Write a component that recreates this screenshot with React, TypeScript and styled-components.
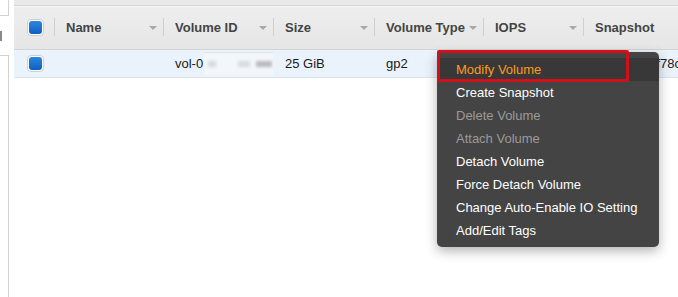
import styled, { createGlobalStyle } from "styled-components";

const GlobalStyle = createGlobalStyle`
  html, body {
    margin: 0;
    padding: 0;
    background: #ffffff;
    font-family: "Liberation Sans", Arial, sans-serif;
  }
`;

const Page = styled.div`
  width: 678px;
  height: 297px;
  display: flex;
  overflow: hidden;
  background: #ffffff;
`;

const Sidebar = styled.div`
  width: 14px;
  flex-shrink: 0;
  display: flex;
  flex-direction: column;
`;

const SideBoxTop = styled.div`
  width: 8px;
  height: 15px;
  border-right: 1px solid #d2d2d2;
  border-bottom: 1px solid #d2d2d2;
`;

const SideMark = styled.div`
  width: 2px;
  height: 10px;
  margin-top: 15px;
  background: #8a8a8a;
`;

const SideBoxBottom = styled.div`
  width: 8px;
  flex: 1;
  margin-top: 14px;
  border-right: 1px solid #d2d2d2;
  border-top: 1px solid #d2d2d2;
`;

const Main = styled.div`
  flex: 1;
  position: relative;
  display: flex;
  flex-direction: column;
`;

const TopStrip = styled.div`
  height: 5px;
  background: #e9e9e9;
  border-bottom: 1px solid #d6d6d6;
`;

const cols = "40px 109px 110px 101px 109px 100px 1fr";

const HeaderRow = styled.div`
  box-sizing: border-box;
  height: 44px;
  padding-bottom: 2px;
  display: grid;
  grid-template-columns: ${cols};
  align-items: center;
  background: linear-gradient(#eeeeee, #e6e6e6);
  border-bottom: 1px solid #d4d4d4;
  border-top: 1px solid #f6f6f6;
`;

const HeadCell = styled.div`
  position: relative;
  display: flex;
  align-items: center;
  height: 18px;
  padding-left: 11px;
  border-left: 1px solid #cfcfcf;
  font-size: 13px;
  font-weight: bold;
  color: #444444;
  white-space: nowrap;
`;

const SortArrow = styled.span`
  position: absolute;
  right: 6px;
  top: 8px;
  width: 0;
  height: 0;
  border-left: 4px solid transparent;
  border-right: 4px solid transparent;
  border-top: 4px solid #a8a8a8;
`;

const BodyRow = styled.div`
  height: 27px;
  display: grid;
  grid-template-columns: ${cols};
  align-items: center;
  background: #eaf2fc;
  border-bottom: 1px solid #dde3ea;
`;

const Cell = styled.div`
  padding-left: 12px;
  font-size: 13px;
  color: #1a1a1a;
  white-space: nowrap;
  overflow: hidden;
  display: flex;
  align-items: center;
`;

const CheckCell = styled.div`
  display: flex;
  justify-content: center;
  padding-left: 2px;
`;

const Checkbox = styled.div`
  width: 17px;
  height: 17px;
  box-sizing: border-box;
  border: 1px solid #cfcfcf;
  border-radius: 4px;
  background: #ffffff;
  display: flex;
  align-items: center;
  justify-content: center;
`;

const CheckFill = styled.div`
  width: 13px;
  height: 13px;
  border-radius: 3px;
  background: linear-gradient(#2f86de, #0b60c0);
`;

const Redacted = styled.span`
  position: relative;
  display: inline-block;
  width: 76px;
  height: 22px;
  margin-left: 1px;
  background: #f3f6fa;
  border-top: 1px solid #dfe3e8;
`;

const Blob = styled.span<{ $left: number; $width: number; $shade: string }>`
  position: absolute;
  top: 8px;
  left: ${(p) => p.$left}px;
  width: ${(p) => p.$width}px;
  height: 6px;
  background: ${(p) => p.$shade};
  filter: blur(1.5px);
`;

const Menu = styled.div`
  position: absolute;
  left: 423px;
  top: 52px;
  width: 222px;
  padding: 6px 0 5px;
  background: #444444;
  border-radius: 5px;
  box-shadow: 0 4px 12px rgba(0, 0, 0, 0.3);
`;

const MenuItem = styled.div<{ $disabled?: boolean; $active?: boolean }>`
  height: 23px;
  line-height: 23px;
  padding-left: 19px;
  font-size: 13px;
  color: ${(p) => (p.$active ? "#ff9a1f" : p.$disabled ? "#9a9a9a" : "#ffffff")};
  background: ${(p) => (p.$active ? "#383838" : "transparent")};
  white-space: nowrap;
`;

const Highlight = styled.div`
  position: absolute;
  left: 423px;
  top: 50px;
  width: 192px;
  height: 32px;
  box-sizing: border-box;
  border: 3px solid #d2101c;
  border-radius: 2px;
  pointer-events: none;
`;

const headers = ["Name", "Volume ID", "Size", "Volume Type", "IOPS", "Snapshot"];

const items = [
  { label: "Modify Volume", active: true },
  { label: "Create Snapshot" },
  { label: "Delete Volume", disabled: true },
  { label: "Attach Volume", disabled: true },
  { label: "Detach Volume" },
  { label: "Force Detach Volume" },
  { label: "Change Auto-Enable IO Setting" },
  { label: "Add/Edit Tags" },
];

export default function App() {
  return (
    <>
      <GlobalStyle />
      <Page>
        <Sidebar>
          <SideBoxTop />
          <SideMark />
          <SideBoxBottom />
        </Sidebar>
        <Main>
          <TopStrip />
          <HeaderRow>
            <CheckCell>
              <Checkbox>
                <CheckFill />
              </Checkbox>
            </CheckCell>
            {headers.map((h, i) => (
              <HeadCell key={h}>
                {h}
                {i < headers.length - 1 && <SortArrow />}
              </HeadCell>
            ))}
          </HeaderRow>
          <BodyRow>
            <CheckCell>
              <Checkbox>
                <CheckFill />
              </Checkbox>
            </CheckCell>
            <Cell />
            <Cell>
              vol-0
              <Redacted>
                <Blob $left={4} $width={8} $shade="#d6d9de" />
                <Blob $left={34} $width={12} $shade="#d9dce0" />
                <Blob $left={52} $width={16} $shade="#b9bcc2" />
              </Redacted>
            </Cell>
            <Cell>25 GiB</Cell>
            <Cell>gp2</Cell>
            <Cell />
            <Cell>snap-0e4df78c</Cell>
          </BodyRow>
          <Menu>
            {items.map((it) => (
              <MenuItem key={it.label} $active={it.active} $disabled={it.disabled}>
                {it.label}
              </MenuItem>
            ))}
          </Menu>
          <Highlight />
        </Main>
      </Page>
    </>
  );
}
